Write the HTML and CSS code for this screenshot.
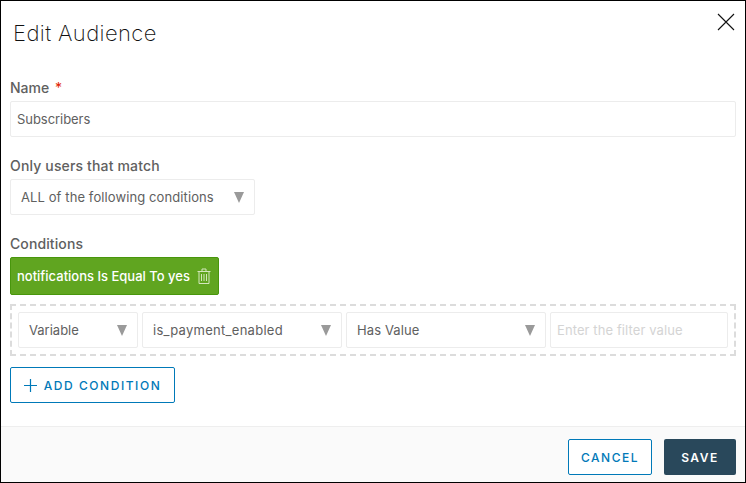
FILE: index.html
```html
<!DOCTYPE html>
<html lang="en">
<head>
<meta charset="utf-8">
<title>Edit Audience</title>
<link rel="stylesheet" href="styles.css">
</head>
<body>
<div class="modal">
  <div class="head">
    <h1 class="title">Edit Audience</h1>
    <svg class="close" width="18" height="18" viewBox="0 0 18 18"><path d="M1 1L17 17M17 1L1 17" stroke="#111" stroke-width="1.1" fill="none"/></svg>
  </div>
  <div class="body">
    <div class="label label-name">Name <span class="req">*</span></div>
    <div class="field input-name">Subscribers</div>
    <div class="label label-match">Only users that match</div>
    <div class="field select select-match"><span>ALL of the following conditions</span><i class="arrow"></i></div>
    <div class="label label-cond">Conditions</div>
    <div class="chip">
      <span>notifications Is Equal To yes</span>
      <svg class="trash" width="14" height="16" viewBox="0 0 14 16" fill="none" stroke="#d3e6bd" stroke-width="1"><path d="M0.5 3.5H13.5M5 3.5V1H9V3.5M2 3.5V15.5H12V3.5M4.5 6V13M7 6V13M9.5 6V13"/></svg>
    </div>
    <div class="builder">
      <div class="field select sel-var"><span>Variable</span><i class="arrow"></i></div>
      <div class="field select sel-name"><span>is_payment_enabled</span><i class="arrow"></i></div>
      <div class="field select sel-op"><span>Has Value</span><i class="arrow"></i></div>
      <div class="field filter">Enter the filter value</div>
    </div>
    <button class="btn btn-outline add"><svg width="13" height="13" viewBox="0 0 13 13"><path d="M6.5 0V13M0 6.5H13" stroke="#0079b8" stroke-width="1.2" fill="none"/></svg>ADD CONDITION</button>
  </div>
  <div class="foot">
    <button class="btn btn-outline cancel">CANCEL</button>
    <button class="btn save">SAVE</button>
  </div>
</div>
</body>
</html>
```
FILE: styles.css
```css
* { box-sizing: border-box; }
html, body { margin: 0; padding: 0; background: #fff; }
body { font-family: "Inter", "Liberation Sans", sans-serif; color: #565656; }
.modal {
  width: 746px; height: 483px;
  border: 1px solid #000;
  display: flex; flex-direction: column;
  background: #fff;
}
.head {
  display: flex; justify-content: space-between; align-items: flex-start;
  height: 70px; padding: 12px 10px 0 12px;
}
.title { margin: 6px 0 0; font-size: 22px; font-weight: 200; line-height: 28px; letter-spacing: 0.4px; color: #111; }
.body { flex: 1; padding: 0 9px; display: flex; flex-direction: column; align-items: flex-start; }
.label { font-size: 14px; font-weight: 500; line-height: 18px; color: #606060; }
.label-name { margin-top: 8px; }
.label-match { margin-top: 20px; letter-spacing: 0.15px; }
.label-cond { margin-top: 20px; letter-spacing: 0.1px; }
.req { color: #e02200; margin-left: 2px; font-weight: 400; }
.field {
  height: 36px; border: 1px solid #ececec; border-radius: 2px;
  background: #fff; font-size: 13px; line-height: 34px; color: #606060;
  display: flex; align-items: center;
}
.input-name { width: 726px; margin-top: 4px; padding-left: 6px; letter-spacing: -0.05px; }
.select { justify-content: space-between; padding: 0 10px; }
.select span { margin-top: -1px; }
.select-match { width: 245px; margin-top: 4px; letter-spacing: 0.1px; }
.arrow {
  width: 0; height: 0; flex: none;
  border-left: 5.5px solid transparent; border-right: 5.5px solid transparent;
  border-top: 11px solid #9a9a9a;
}
.chip {
  margin-top: 4px; width: 209px; height: 38px;
  background: #60a520; border: 1px solid #48960c; border-radius: 2px;
  color: #fff; font-size: 13px; font-weight: 500;
  display: flex; align-items: center; justify-content: space-between;
  padding: 0 7px 0 6px;
}
.builder {
  margin-top: 9px; width: 726px; height: 52px;
  border: 2px dashed #dcdcdc;
  padding: 6px;
  display: flex; gap: 4px;
}
.sel-var { width: 120px; }
.sel-name { width: 200px; letter-spacing: 0.28px; }
.sel-op { width: 200px; letter-spacing: 0.1px; }
.filter { width: 178px; padding-left: 6px; color: #d4d4d4; letter-spacing: 0.1px; }
.btn {
  height: 36px; border-radius: 2px; font-family: inherit;
  font-size: 12px; font-weight: 500; letter-spacing: 1.55px;
  display: flex; align-items: center; justify-content: center; cursor: pointer;
}
.btn-outline { background: #fff; border: 1px solid #0079b8; color: #0079b8; }
.add { margin-top: 11px; width: 165px; gap: 7px; }
.foot {
  height: 56px; background: #fafafa; border-top: 1px solid #eee;
  display: flex; justify-content: flex-end; align-items: flex-start;
  gap: 12px; padding: 12px 9px 0 0;
}
.cancel { width: 84px; }
.save { width: 72px; background: #29485b; border: 0; color: #fff; font-weight: 600; }
```
